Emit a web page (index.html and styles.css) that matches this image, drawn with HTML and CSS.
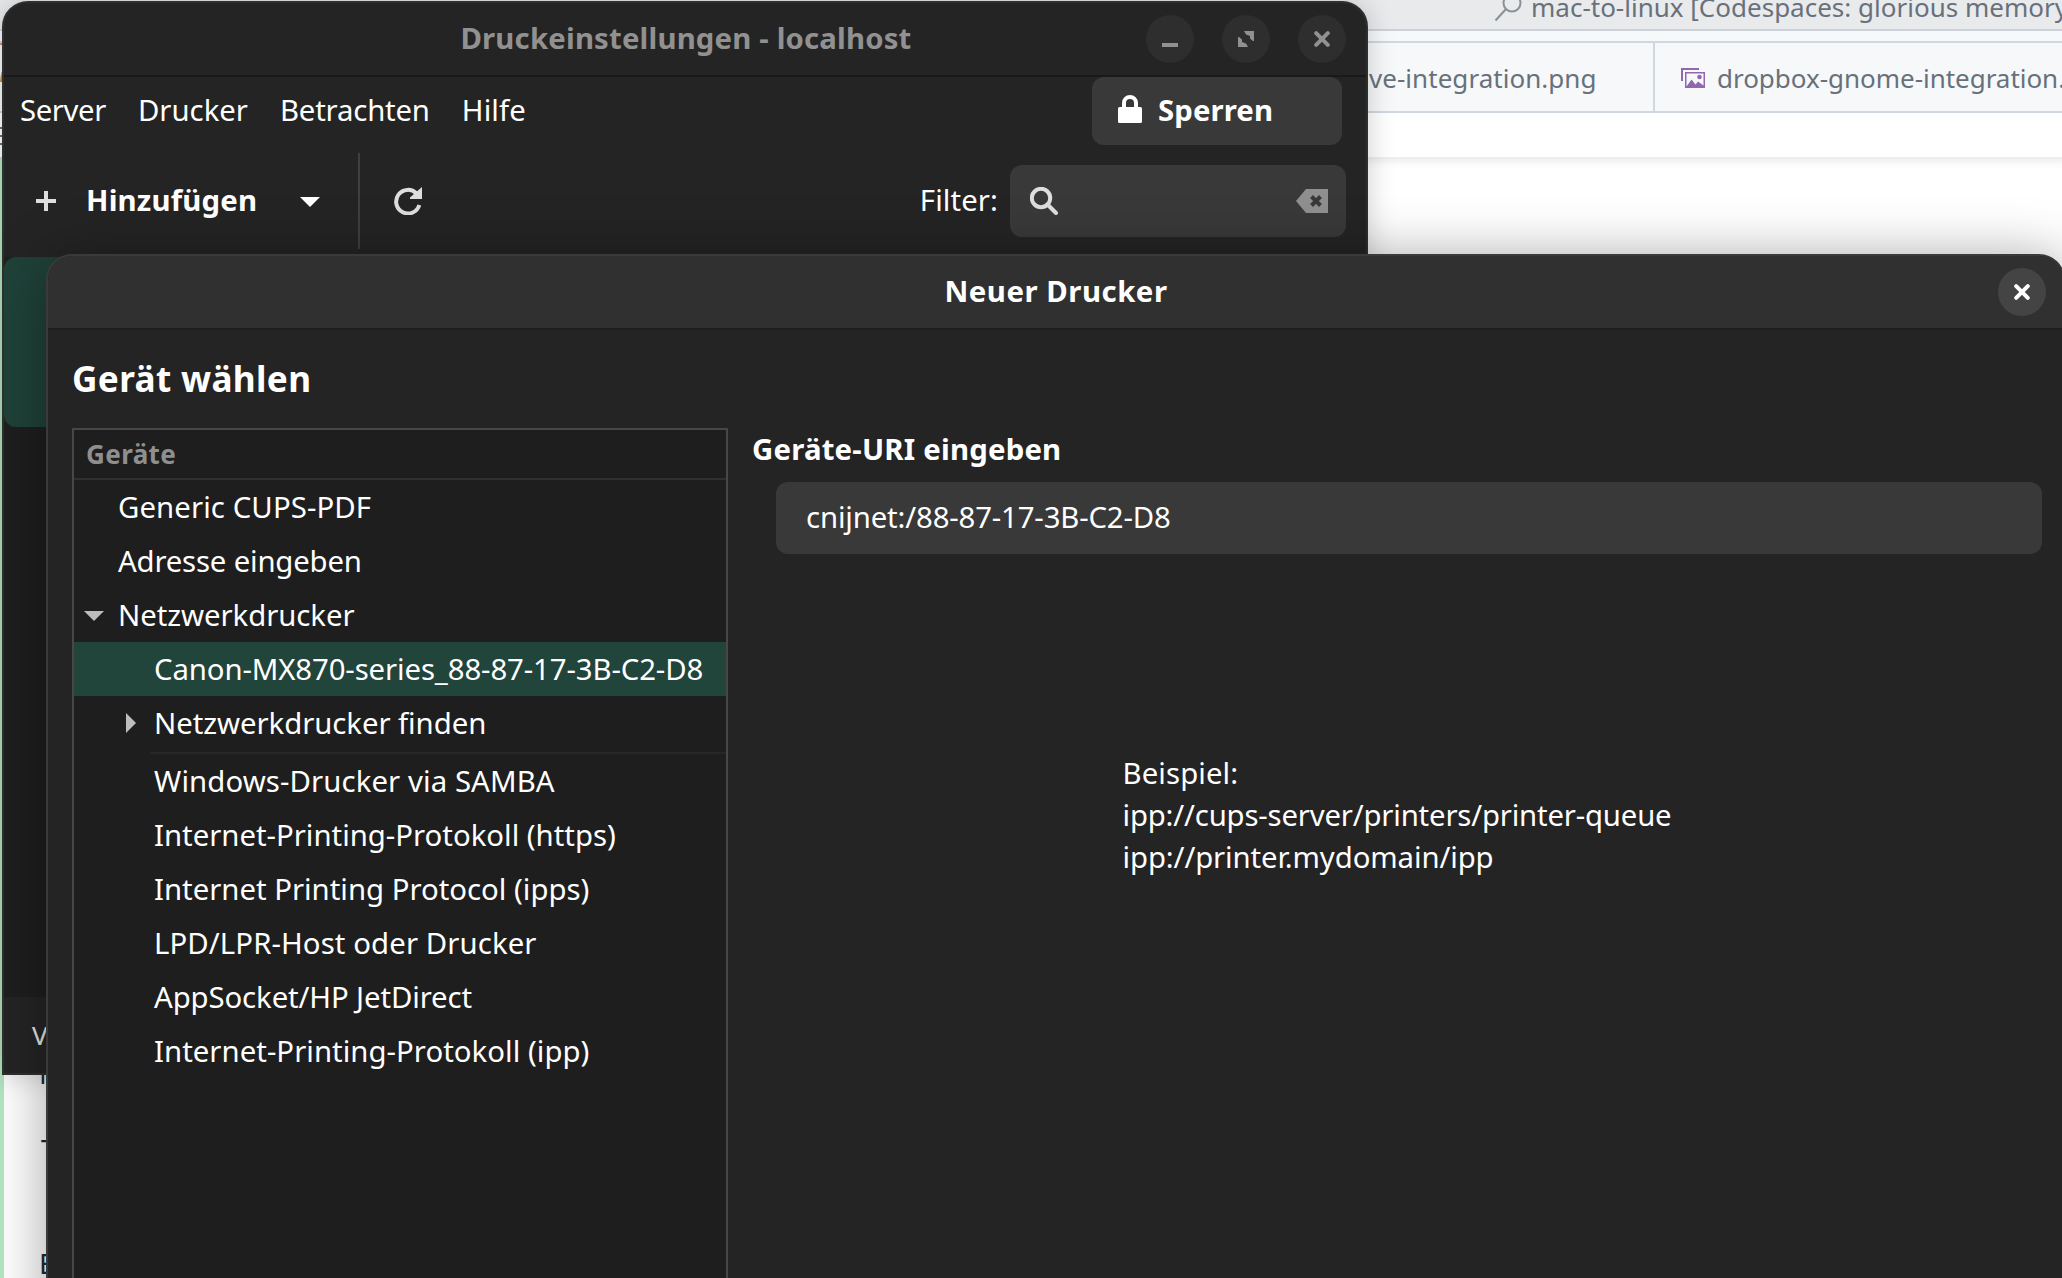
FILE: index.html
```html
<!DOCTYPE html>
<html lang="de">
<head>
<meta charset="utf-8">
<title>Druckeinstellungen</title>
<link rel="stylesheet" href="styles.css">
</head>
<body>
<div class="desktop">
  <div class="editor">
    <div class="editor-title">
      <svg class="editor-search" viewBox="0 0 28 28"><circle cx="18" cy="9" r="8.500"/><path d="M12 15 1.500 26.500"/></svg>
      <span>mac-to-linux [Codespaces: glorious memory</span>
    </div>
    <div class="editor-tabs">
      <div class="tab tab-first"><span>ve-integration.png</span></div>
      <div class="tab tab-second">
        <svg class="tab-icon" viewBox="0 0 24 20"><path d="M0 0h18v2H2v11H0z"/><path fill-rule="evenodd" d="M4 4h20v16H4zM5.500 5.500v13l5-7 4 5 2.500-3 5.500 4V5.500z"/><circle cx="18.500" cy="9" r="2.300"/></svg>
        <span>dropbox-gnome-integration.</span>
      </div>
    </div>
    <div class="editor-crumbs"></div>
    <div class="editor-text">
      <div class="line line-n">N</div>
      <div class="line line-t">T</div>
      <div class="line line-e">E</div>
    </div>
  </div>
  <div class="sliver sliver-red"></div>
  <div class="sliver sliver-amber"></div>
  <div class="sliver sliver-lines"></div>

  <section class="window settings">
    <header class="titlebar">
      <div class="title">Druckeinstellungen - localhost</div>
      <div class="controls">
        <span class="round"><svg viewBox="0 0 16 16"><path d="M0 12h16v4H0z"/></svg></span>
        <span class="round"><svg viewBox="0 0 16 16"><path d="M6 0h10v10h-1l-3-2.500V5L8 3.500zM0 6h1l3 2.500V11l4 1.500 2 3.500H0z"/></svg></span>
        <span class="round"><svg class="cross" viewBox="0 0 16 16"><path d="M2.200 2.200 13.800 13.800M13.800 2.200 2.200 13.800"/></svg></span>
      </div>
    </header>
    <nav class="menubar">
      <span class="tighter">Server</span><span>Drucker</span><span class="narrow">Betrachten</span><span class="wide">Hilfe</span>
      <div class="lock">
        <svg viewBox="0 0 24 28"><path class="shackle" d="M6 14V8a6 6 0 0 1 12 0v6"/><rect y="12" width="24" height="16" rx="1.500"/></svg>
        <b>Sperren</b>
      </div>
    </nav>
    <div class="toolbar">
      <svg class="plus" viewBox="0 0 20 20"><path d="M8 0h4v8h8v4h-8v8H8v-8H0V8h8z"/></svg>
      <b class="add">Hinzufügen</b>
      <svg class="caret" viewBox="0 0 20 10"><path d="M0 0h20L10 10z"/></svg>
      <div class="divider"></div>
      <svg class="refresh" viewBox="0 0 28 28"><path class="arc" d="M22.500 6.500A11.800 11.800 0 1 0 25.300 18"/><path d="M28 0v12H16v-1.500z"/></svg>
      <span class="filter-label">Filter:</span>
      <div class="filter">
        <svg class="search" viewBox="0 0 28 28"><circle cx="11" cy="11" r="9.200"/><path d="M17.500 17.500 26 26"/></svg>
        <svg class="clear" viewBox="0 0 32 24"><path d="M0 12 10 0h22v24H10z"/><path class="x" d="M15.500 7.500l9 9m0-9-9 9"/></svg>
      </div>
    </div>
    <div class="printers"><div class="printer-selected"></div></div>
    <footer class="status">V</footer>
  </section>

  <section class="window dialog">
    <header class="titlebar">
      <div class="title">Neuer Drucker</div>
      <div class="controls"><span class="round"><svg class="cross" viewBox="0 0 16 16"><path d="M2.200 2.200 13.800 13.800M13.800 2.200 2.200 13.800"/></svg></span></div>
    </header>
    <h1>Gerät wählen</h1>
    <div class="columns">
      <div class="devices">
        <div class="devices-head">Geräte</div>
        <div class="row wide">Generic CUPS-PDF</div>
        <div class="row narrow">Adresse eingeben</div>
        <div class="row slim"><svg class="open" viewBox="0 0 20 10"><path d="M0 0h20L10 10z"/></svg>Netzwerkdrucker</div>
        <div class="row child selected tight">Canon-MX870-series_88-87-17-3B-C2-D8</div>
        <div class="row child"><svg class="closed" viewBox="0 0 10 20"><path d="M0 0v20l10-10z"/></svg><span class="slim">Netzwerkdrucker finden</span></div>
        <div class="separator"></div>
        <div class="row child wide">Windows-Drucker via SAMBA</div>
        <div class="row child">Internet-Printing-Protokoll (https)</div>
        <div class="row child">Internet Printing Protocol (ipps)</div>
        <div class="row child wide">LPD/LPR-Host oder Drucker</div>
        <div class="row child tight">AppSocket/HP JetDirect</div>
        <div class="row child airy">Internet-Printing-Protokoll (ipp)</div>
      </div>
      <div class="details">
        <h2>Geräte-URI eingeben</h2>
        <div class="entry">cnijnet:/88-87-17-3B-C2-D8</div>
        <p class="example"><span class="wide">Beispiel:</span><br><span class="narrow">ipp://cups-server/printers/printer-queue</span><br><span class="tight">ipp://printer.mydomain/ipp</span></p>
      </div>
    </div>
  </section>
</div>
</body>
</html>
```

FILE: styles.css
```css
* { box-sizing: border-box; }
body { margin: 0; overflow: hidden; font-family: "Noto Sans", sans-serif; font-size: 29.33px; line-height: 42px; color: #fff; }
svg { display: block; flex: none; fill: currentColor; }
.desktop { position: relative; width: 2062px; height: 1278px; overflow: hidden; background: #fff; }

/* Letter fitting */
.tighter { letter-spacing: -.4px; }
.narrow { letter-spacing: -.18px; }
.tight { letter-spacing: -.11px; }
.slim { letter-spacing: -.05px; }
.airy { letter-spacing: .04px; }
.wide { letter-spacing: .1px; }

/* Editor behind the windows */
.editor { height: 100%; display: flex; flex-direction: column; font-size: 26px; color: #68717b; }
.editor-title { height: 31px; flex: none; display: flex; align-items: center; padding-left: 1494px; gap: 9px; background: #e9eaec; border-bottom: 2px solid #ccd1d7; white-space: nowrap; }
.editor-title span { position: relative; top: -8px; }
.editor-search { width: 28px; height: 28px; fill: none; stroke: #8a9098; stroke-width: 2; position: relative; top: -7px; }
.editor-tabs { height: 82px; flex: none; display: flex; padding-top: 10px; background: #f6f8fa; border-bottom: 2px solid #d0d7de; }
.tab { flex: none; display: flex; align-items: center; gap: 13px; padding-left: 27px; border-top: 2px solid #d0d7de; width: 450px; white-space: nowrap; letter-spacing: .04px; }
.tab span { padding-top: 2px; }
.tab-first { width: 1655px; padding-left: 1369px; border-right: 2px solid #d0d7de; }
.tab-second { padding-left: 26px; gap: 12px; letter-spacing: -.03px; }
.tab-icon { width: 24px; height: 20px; margin-top: 2px; color: #9068b0; }
.editor-crumbs { height: 44px; flex: none; background: #fff; }
.editor-text { flex: 1; border-left: 4px solid #b4e5c1; box-shadow: inset 0 14px 12px -12px rgba(0,0,0,.12); color: #24292f; font-size: 28px; line-height: 38px; padding: 897px 0 0 35px; }
.line-t { margin: 38px 0 76px 2px; }
.sliver { position: absolute; left: 0; width: 2px; }
.sliver-red { top: 43px; height: 2px; background: #f0805f; }
.sliver-amber { top: 72px; height: 10px; background: linear-gradient(100deg, #fff 20%, #c98a1c 60%); }
.sliver-lines { top: 127px; height: 18px; background: repeating-linear-gradient(#6a6f76 0 2px, #fff 2px 8px); }

/* Windows */
.window { position: absolute; display: flex; flex-direction: column; background: #242424; border: 2px solid #2e3030; }
.titlebar { height: 74px; flex: none; display: grid; align-items: center; border-bottom: 2px solid #191919; }
.title { grid-area: 1 / 1; text-align: center; font-weight: bold; padding: 0 0 2px 2px; letter-spacing: .17px; }
.controls { grid-area: 1 / 1; justify-self: end; display: flex; gap: 28px; padding-right: 20px; }
.round { width: 48px; height: 48px; border-radius: 50%; display: grid; place-items: center; background: #2e2e2e; }
.round svg { width: 16px; height: 16px; }
.cross { stroke: currentColor; stroke-width: 4; stroke-linecap: round; }

.settings { left: 2px; top: 1px; width: 1366px; height: 1074px; border-radius: 26px 26px 0 0; box-shadow: 0 0 28px rgba(0,0,0,.2); }
.settings .titlebar { color: #919191; }
.menubar { height: 68px; flex: none; display: flex; align-items: center; gap: 32px; padding: 0 24px 0 16px; }
.menubar > span { padding-bottom: 2px; }
.lock { margin-left: auto; width: 250px; height: 68px; border-radius: 12px; background: #393939; display: flex; align-items: center; gap: 16px; padding-left: 26px; }
.lock b { padding-bottom: 2px; letter-spacing: .1px; }
.lock svg { width: 24px; height: 28px; position: relative; top: -2px; }
.shackle { fill: none; stroke: currentColor; stroke-width: 4; }
.toolbar { height: 112px; flex: none; display: flex; align-items: center; padding: 0 20px 0 32px; }
.plus { width: 20px; height: 20px; color: #dedede; }
.add { width: 242px; padding: 0 0 2px 30px; letter-spacing: .2px; }
.caret { width: 20px; height: 10px; margin: 1px 38px 0 2px; }
.divider { width: 2px; height: 96px; background: #3f3f3f; }
.refresh { width: 28px; height: 28px; margin-left: 34px; color: #dedede; }
.arc { fill: none; stroke: currentColor; stroke-width: 4; }
.filter-label { margin-left: auto; padding: 0 12px 2px 0; letter-spacing: .1px; }
.filter { width: 336px; height: 72px; border-radius: 12px; background: #393939; display: flex; align-items: center; justify-content: space-between; padding: 0 18px 0 20px; }
.search { width: 28px; height: 28px; fill: none; stroke: #dedede; stroke-width: 4; stroke-linecap: round; }
.clear { width: 32px; height: 24px; color: #8f8f8f; }
.clear .x { stroke: #393939; stroke-width: 4; }
.printers { flex: 1; background: #1e1e1e; }
.printer-selected { height: 170px; border-radius: 12px; background: #1f4239; }
.status { height: 76px; flex: none; padding: 17px 0 0 28px; font-size: 26px; color: #e6e6e6; }

.dialog { left: 46px; top: 254px; width: 2019px; height: 1100px; border-color: #3a3a3a; border-radius: 26px 26px 0 0; box-shadow: 0 4px 56px rgba(0,0,0,.36); }
.dialog .titlebar { background: #303030; border-color: #1e1e1e; border-radius: 24px 24px 0 0; }
.dialog .title { padding-left: 1px; letter-spacing: .53px; }
.dialog .controls { padding-right: 17px; }
.dialog .round { background: #444; }
h1 { margin: 0; height: 98px; flex: none; padding: 23px 0 0 24px; font-size: 35.2px; line-height: 50px; letter-spacing: .33px; }
.columns { flex: 1; display: flex; padding: 0 21px 0 24px; gap: 24px; }
.devices { width: 656px; flex: none; background: #1e1e1e; border: 2px solid #474747; white-space: nowrap; }
.devices-head { height: 50px; border-bottom: 2px solid #303030; padding-left: 12px; line-height: 49px; font-size: 26px; font-weight: bold; letter-spacing: .4px; color: #8f8f8f; }
.row { height: 54px; line-height: 54px; padding-left: 44px; display: flex; align-items: center; }
.child { padding-left: 80px; }
.selected { background: #21443b; }
.open { width: 20px; height: 10px; margin: 2px 14px 0 -34px; color: #bdbdbd; }
.closed { width: 10px; height: 20px; margin: 0 18px 0 -28px; color: #bdbdbd; }
.separator { height: 4px; margin-left: 76px; border-bottom: 2px solid #272727; }
.details { flex: 1; display: flex; flex-direction: column; }
h2 { margin: 0; height: 54px; line-height: 42px; font-size: 29.33px; letter-spacing: .21px; }
.entry { height: 72px; line-height: 70px; margin-left: 24px; padding-left: 30px; border-radius: 12px; background: #393939; letter-spacing: -.15px; }
.example { margin: 198px 0 0; align-self: center; }
```
